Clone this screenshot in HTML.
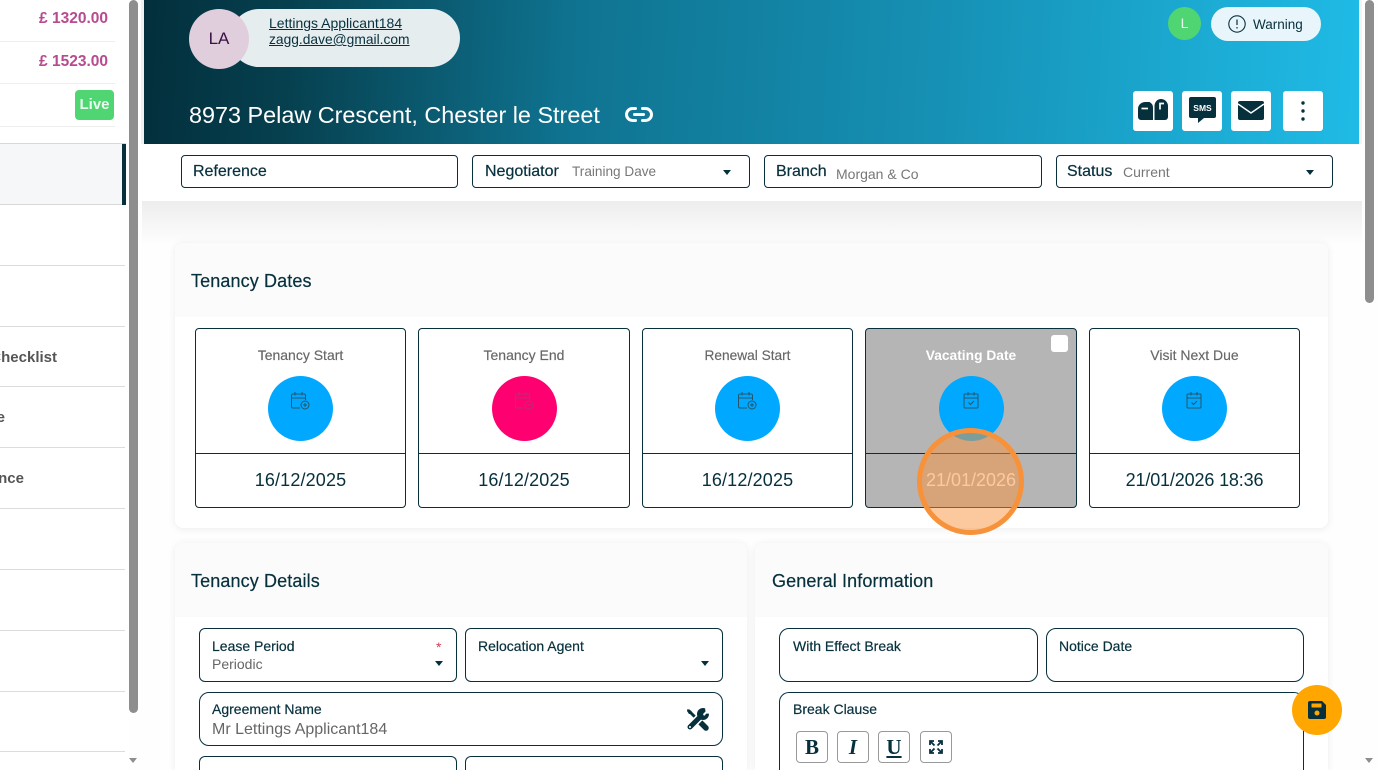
<!DOCTYPE html>
<html><head><meta charset="utf-8"><style>
*{box-sizing:border-box}
html,body{margin:0;padding:0;width:1377px;height:770px;overflow:hidden;background:#fefefe;font-family:"Liberation Sans",sans-serif;color:#07303d}
#w{position:relative;width:1377px;height:770px;overflow:hidden;background:#fefefe}
.a{position:absolute}
.t{position:absolute;white-space:nowrap;line-height:1}
.box{position:absolute;border:1px solid #07303d;background:#fff}
.line{position:absolute;left:0;width:125px;height:1px;background:#dcdcdc}
.dc{position:absolute;top:328px;height:180px;border:1px solid #07303d;border-radius:4px;background:#fff}
.dc .div{position:absolute;left:0;right:0;top:124px;height:1px;background:#07303d}
.dc .lab{position:absolute;left:0;right:0;top:19px;text-align:center;font-size:14px;line-height:15px;color:#666;-webkit-text-stroke:.15px #666}
.dc .circ{position:absolute;top:47px;width:65px;height:65px;border-radius:50%;background:#00a8ff;left:72px}
.dc .circ svg{position:absolute;left:22px;top:15px}
.dc .val{position:absolute;left:0;right:0;top:141px;text-align:center;font-size:18px;line-height:20px;color:#07303d;letter-spacing:.15px}
.card{position:absolute;background:#fff;border-radius:8px 8px 0 0;box-shadow:0 1px 8px rgba(0,0,0,.08)}
.ch{position:absolute;left:0;right:0;top:0;background:#fbfbfb;border-radius:8px 8px 0 0}
.ttl{position:absolute;white-space:nowrap;font-size:18px;line-height:18px;letter-spacing:.12px;-webkit-text-stroke:.2px #07303d}
.fl{position:absolute;font-size:14px;line-height:14px;color:#07303d;white-space:nowrap;-webkit-text-stroke:.2px #07303d}
.fv{position:absolute;font-size:14px;line-height:14px;color:#666;white-space:nowrap}
.tl{position:absolute;white-space:nowrap;line-height:1;font-size:16px;-webkit-text-stroke:.2px #07303d}
.tv{position:absolute;white-space:nowrap;line-height:1;font-size:13.6px;color:#777}
.tri{position:absolute;width:0;height:0;border-left:4.5px solid transparent;border-right:4.5px solid transparent;border-top:5px solid #07303d}
.btn{position:absolute;top:731px;width:32px;height:32px;border:1px solid #999;border-radius:4px;background:#fff;text-align:center;font-family:"Liberation Serif",serif;font-size:21px;line-height:31px;color:#07303d}
.hb{position:absolute;top:91px;width:40px;height:40px;background:#fff;border-radius:3px}
.side{font-size:15px;font-weight:bold;color:#555}
</style></head><body><div id="w">

<!-- sidebar -->
<div class="a" style="left:0;top:0;width:129px;height:770px;background:#fff"></div>
<div class="t" style="right:1269px;top:11px;font-size:15.500px;font-weight:bold;color:#b84a8e">£ 1320.00</div>
<div class="t" style="right:1269px;top:54px;font-size:15.500px;font-weight:bold;color:#b84a8e">£ 1523.00</div>
<div class="line" style="top:41px;width:115px;background:#eee"></div>
<div class="line" style="top:83px;width:115px;background:#eee"></div>
<div class="line" style="top:126px;width:115px;background:#eee"></div>
<div class="a" style="left:75px;top:90px;width:39px;height:30px;background:#4fd672;border-radius:4px;color:#eafaef;font-size:15px;font-weight:bold;text-align:center;line-height:30px">Live</div>
<div class="a" style="left:0;top:143px;width:126px;height:62px;background:#f6f7f8;border-top:1px solid #d8d8d8;border-bottom:1px solid #d8d8d8"></div>
<div class="a" style="left:122px;top:144px;width:4px;height:61px;background:#07303d"></div>
<div class="line" style="top:265px"></div><div class="line" style="top:326px"></div><div class="line" style="top:386px"></div><div class="line" style="top:447px"></div><div class="line" style="top:508px"></div><div class="line" style="top:569px"></div><div class="line" style="top:630px"></div><div class="line" style="top:691px"></div><div class="line" style="top:751px"></div>
<div class="a" style="left:0;top:345px;width:60px;height:24px;overflow:hidden"><div class="t side" style="right:3px;top:5px">Checklist</div></div>
<div class="a" style="left:0;top:406px;width:10px;height:24px;overflow:hidden"><div class="t side" style="right:5px;top:4px">Date</div></div>
<div class="a" style="left:0;top:466px;width:26px;height:24px;overflow:hidden"><div class="t side" style="right:2px;top:5px">Compliance</div></div>
<!-- left scrollbar -->
<div class="a" style="left:129px;top:0;width:9px;height:713px;background:#8e8e8e;border-radius:5px"></div>
<div class="tri" style="left:129px;top:758px;border-top-color:#8e8e8e"></div>

<!-- right scrollbar -->
<div class="a" style="left:1365px;top:0;width:9px;height:303px;background:#8e8e8e;border-radius:5px"></div>
<div class="tri" style="left:1365px;top:758px;border-top-color:#8e8e8e"></div>

<!-- header -->
<div class="a" style="left:142px;top:201px;width:1220px;height:44px;background:linear-gradient(#ededed,#fefefe)"></div>
<div class="a" style="left:141px;top:0;width:1222px;height:201px;background:#fff"></div>
<div class="a" style="left:141px;top:0;width:3px;height:144px;background:#f0f0f0"></div>
<div class="a" style="left:1359px;top:0;width:3px;height:144px;background:#f4f4f4"></div>
<div class="a" style="left:144px;top:0;width:1215px;height:144px;background:linear-gradient(93deg,#032f3c 0%,#06404f 12%,#0f7390 35%,#1690b4 65%,#1fbbe6 100%)"></div>
<div class="a" style="left:230px;top:9px;width:230px;height:58px;border-radius:29px;background:#e6edef"></div>
<div class="a" style="left:189px;top:9px;width:60px;height:60px;border-radius:50%;background:#e0cedd;text-align:center;line-height:60px;font-size:17px;color:#3a1045">LA</div>
<div class="t" style="left:269px;top:15px;font-size:14px;text-decoration:underline;line-height:16px">Lettings Applicant184</div>
<div class="t" style="left:269px;top:32px;font-size:13.800px;text-decoration:underline;line-height:16px">zagg.dave@gmail.com</div>
<div class="t" style="left:189px;top:102px;font-size:23.400px;line-height:26px;color:#fff">8973 Pelaw Crescent, Chester le Street</div>
<svg class="a" style="left:624px;top:106px" width="30" height="17" viewBox="0 0 30 17" fill="none" stroke="#fff" stroke-width="3" stroke-linecap="round"><path d="M11.500 2.500H8.500a6 6 0 0 0 0 12h3M18.500 2.500h3a6 6 0 0 1 0 12h-3M10.500 8.500h9"/></svg>

<div class="a" style="left:1168px;top:7px;width:33px;height:33px;border-radius:50%;background:#4fd672;color:#e8f8ec;text-align:center;line-height:33px;font-size:14px">L</div>
<div class="a" style="left:1211px;top:7px;width:110px;height:34px;border-radius:17px;background:#e8f5fa"></div>
<svg class="a" style="left:1228px;top:15px" width="18" height="18" viewBox="0 0 18 18"><circle cx="9" cy="9" r="8.200" fill="none" stroke="#07303d" stroke-width="1.100"/><path d="M9 4.500v5.500M9 12v1.500" stroke="#07303d" stroke-width="1.200" fill="none"/></svg>
<div class="t" style="left:1253px;top:17px;font-size:13.500px;line-height:15px">Warning</div>

<div class="hb" style="left:1133px"><svg class="a" style="left:5px;top:8px" width="30" height="22" viewBox="0 0 30 22"><path d="M7 3h4.500a6.500 6.500 0 0 1 3.500 6v12H3a3 3 0 0 1-3-3V10a7 7 0 0 1 7-7z" fill="#07303d"/><path d="M16.500 21V7c0-4 3-7 6.500-7s7 3 7 7v11a3 3 0 0 1-3 3z" fill="#07303d"/><path d="M3.500 9.500h6.500" stroke="#fff" stroke-width="1.700"/><path d="M22 10.500V4.500h4" stroke="#fff" stroke-width="1.700" fill="none"/></svg></div>
<div class="hb" style="left:1182px"><svg class="a" style="left:7px;top:6px" width="27" height="27" viewBox="0 0 27 27"><path d="M2 0h23a2 2 0 0 1 2 2v17a2 2 0 0 1-2 2H15l-6 5v-5H2a2 2 0 0 1-2-2V2a2 2 0 0 1 2-2z" fill="#07303d"/><text x="13.500" y="14" text-anchor="middle" font-family="Liberation Sans" font-size="8.500" font-weight="bold" fill="#fff">SMS</text></svg></div>
<div class="hb" style="left:1231px"><svg class="a" style="left:7px;top:10px" width="26" height="19" viewBox="0 0 26 19"><rect width="26" height="19" rx="2" fill="#07303d"/><path d="M0 3l13 9 13-9" fill="none" stroke="#fff" stroke-width="1.500"/></svg></div>
<div class="hb" style="left:1283px"><svg class="a" style="left:18px;top:10px" width="4" height="20" viewBox="0 0 4 20" fill="#07303d"><circle cx="2" cy="2" r="1.700"/><circle cx="2" cy="10" r="1.700"/><circle cx="2" cy="18" r="1.700"/></svg></div>

<!-- filter bar -->
<div class="box" style="left:181px;top:155px;width:277px;height:33px;border-radius:4px"></div>
<div class="tl" style="left:193px;top:164px">Reference</div>
<div class="box" style="left:472px;top:155px;width:278px;height:33px;border-radius:4px"></div>
<div class="tl" style="left:485px;top:164px">Negotiator</div>
<div class="tv" style="left:572px;top:165px">Training Dave</div>
<div class="tri" style="left:723px;top:170px"></div>
<div class="box" style="left:764px;top:155px;width:278px;height:33px;border-radius:4px"></div>
<div class="tl" style="left:776px;top:164px">Branch</div>
<div class="tv" style="left:836px;top:167px;font-size:14px">Morgan &amp; Co</div>
<div class="box" style="left:1056px;top:155px;width:277px;height:33px;border-radius:4px"></div>
<div class="tl" style="left:1067px;top:164px">Status</div>
<div class="tv" style="left:1123px;top:165px;font-size:14px">Current</div>
<div class="tri" style="left:1306px;top:170px"></div>

<!-- tenancy dates -->
<div class="card" style="left:175px;top:243px;width:1153px;height:285px;border-radius:8px"><div class="ch" style="height:74px"></div></div>
<div class="ttl" style="left:191px;top:272px">Tenancy Dates</div>

<div class="dc" style="left:195px;width:211px"><div class="lab">Tenancy Start</div><div class="circ"><svg width="21" height="21" viewBox="0 0 21 21" fill="none" stroke="#27566b" stroke-width="1"><path d="M10 17H3a1.500 1.500 0 0 1-1.500-1.500V4.500A1.500 1.500 0 0 1 3 3h11a1.500 1.500 0 0 1 1.500 1.500V9M1.500 7h14M5 1v3.500M12 1v3.500"/><circle cx="15" cy="14" r="4"/><path d="M15 12v4M13 14h4"/></svg></div><div class="div"></div><div class="val">16/12/2025</div></div>
<div class="dc" style="left:418px;width:212px"><div class="lab">Tenancy End</div><div class="circ" style="background:#ff0070;left:73px"><svg width="21" height="21" viewBox="0 0 21 21" fill="none" stroke="#bb2c78" stroke-width="1"><path d="M10 17H3a1.500 1.500 0 0 1-1.500-1.500V4.500A1.500 1.500 0 0 1 3 3h11a1.500 1.500 0 0 1 1.500 1.500V9M1.500 7h14M5 1v3.500M12 1v3.500"/><circle cx="15" cy="14" r="4"/><path d="M13 14h4"/></svg></div><div class="div"></div><div class="val">16/12/2025</div></div>
<div class="dc" style="left:642px;width:211px"><div class="lab" style="font-size:13.700px">Renewal Start</div><div class="circ"><svg width="21" height="21" viewBox="0 0 21 21" fill="none" stroke="#27566b" stroke-width="1"><path d="M10 17H3a1.500 1.500 0 0 1-1.500-1.500V4.500A1.500 1.500 0 0 1 3 3h11a1.500 1.500 0 0 1 1.500 1.500V9M1.500 7h14M5 1v3.500M12 1v3.500"/><circle cx="15" cy="14" r="4"/><path d="M15 12v4M13 14h4"/></svg></div><div class="div"></div><div class="val">16/12/2025</div></div>
<div class="dc" style="left:865px;width:212px;background:#b5b5b5"><div class="lab" style="color:#fff;font-weight:bold;font-size:13.800px;-webkit-text-stroke:0">Vacating Date</div><div class="circ" style="left:73px"><svg width="21" height="21" viewBox="0 0 21 21" fill="none" stroke="#27566b" stroke-width="1"><rect x="3" y="3" width="14" height="14" rx="1"/><path d="M3 7h14M7 1v3.500M13 1v3.500M7.500 11.500l2 2 3.500-3.500"/></svg></div><div class="div"></div><div class="val" style="color:#fff;letter-spacing:0">21/01/2026</div><div class="a" style="left:185px;top:6px;width:17px;height:17px;background:#fff;border-radius:3px"></div></div>
<div class="dc" style="left:1089px;width:211px"><div class="lab">Visit Next Due</div><div class="circ"><svg width="21" height="21" viewBox="0 0 21 21" fill="none" stroke="#27566b" stroke-width="1"><rect x="3" y="3" width="14" height="14" rx="1"/><path d="M3 7h14M7 1v3.500M13 1v3.500M7.500 11.500l2 2 3.500-3.500"/></svg></div><div class="div"></div><div class="val" style="letter-spacing:-.15px">21/01/2026 18:36</div></div>

<div class="a" style="left:917px;top:428px;width:107px;height:107px;border-radius:50%;border:5px solid #f7923a;background:rgba(250,145,60,.5)"></div>

<!-- tenancy details -->
<div class="card" style="left:175px;top:543px;width:572px;height:227px"><div class="ch" style="height:74px"></div></div>
<div class="ttl" style="left:191px;top:572px">Tenancy Details</div>
<div class="card" style="left:755px;top:543px;width:573px;height:227px"><div class="ch" style="height:74px"></div></div>
<div class="ttl" style="left:772px;top:572px">General Information</div>

<div class="box" style="left:199px;top:628px;width:258px;height:54px;border-radius:6px"></div>
<div class="fl" style="left:212px;top:639px">Lease Period</div>
<div class="fv" style="left:212px;top:657px">Periodic</div>
<div class="t" style="left:436px;top:640px;font-size:14px;color:#d23c50">*</div>
<div class="tri" style="left:435px;top:661px"></div>
<div class="box" style="left:465px;top:628px;width:258px;height:54px;border-radius:6px"></div>
<div class="fl" style="left:478px;top:639px">Relocation Agent</div>
<div class="tri" style="left:701px;top:661px"></div>

<div class="box" style="left:199px;top:692px;width:524px;height:54px;border-radius:10px"></div>
<div class="fl" style="left:212px;top:702px">Agreement Name</div>
<div class="fv" style="left:212px;top:722px;font-size:16px;line-height:16px">Mr Lettings Applicant184</div>
<svg class="a" style="left:686px;top:708px" width="23" height="23" viewBox="0 0 23 23" fill="none" stroke-linecap="round"><path d="M3 3l17 17" stroke="#07303d" stroke-width="3"/><path d="M13 13l7 7" stroke="#07303d" stroke-width="5.500"/><path d="M1.500 1l4 2 .5 3-3 0-2-3z" fill="#07303d"/><path d="M4 19L15 8" stroke="#fff" stroke-width="8"/><path d="M4 19L15 8" stroke="#07303d" stroke-width="5"/><circle cx="17" cy="6" r="6" fill="#07303d"/><path d="M17 6l2.500-2.500L19 -1h6v7l-4.500-.500L18 8z" fill="#fff"/><circle cx="4" cy="19" r="1" fill="#fff"/></svg>

<div class="box" style="left:199px;top:756px;width:258px;height:14px;border-radius:6px 6px 0 0;border-bottom:0"></div>
<div class="box" style="left:465px;top:756px;width:258px;height:14px;border-radius:6px 6px 0 0;border-bottom:0"></div>

<div class="box" style="left:779px;top:628px;width:259px;height:54px;border-radius:10px"></div>
<div class="fl" style="left:793px;top:639px">With Effect Break</div>
<div class="box" style="left:1046px;top:628px;width:258px;height:54px;border-radius:10px"></div>
<div class="fl" style="left:1059px;top:639px">Notice Date</div>
<div class="box" style="left:779px;top:692px;width:525px;height:78px;border-radius:10px 10px 0 0;border-bottom:0"></div>
<div class="fl" style="left:793px;top:702px">Break Clause</div>
<div class="btn" style="left:796px;font-weight:bold">B</div>
<div class="btn" style="left:837px;font-style:italic;font-weight:bold">I</div>
<div class="btn" style="left:878px;font-weight:bold;text-decoration:underline">U</div>
<div class="btn" style="left:920px"><svg class="a" style="left:8px;top:8px" width="14" height="14" viewBox="0 0 14 14" fill="none" stroke="#07303d" stroke-width="1.800"><path d="M1 5V1h4M9 1h4v4M13 9v4H9M5 13H1V9M2 2l3.500 3.500M12 2L8.500 5.500M12 12L8.500 8.500M2 12l3.500-3.500"/></svg></div>

<!-- save -->
<div class="a" style="left:1292px;top:685px;width:50px;height:50px;border-radius:50%;background:#ffa600"></div>
<svg class="a" style="left:1308px;top:701px" width="18" height="18" viewBox="0 0 18 18"><path d="M2 0h12l4 4v12a2 2 0 0 1-2 2H2a2 2 0 0 1-2-2V2a2 2 0 0 1 2-2z" fill="#07303d"/><rect x="3.500" y="2.500" width="10" height="4" rx=".5" fill="#ffa600"/><circle cx="9" cy="12" r="2.500" fill="#ffa600"/></svg>
</div></body></html>
